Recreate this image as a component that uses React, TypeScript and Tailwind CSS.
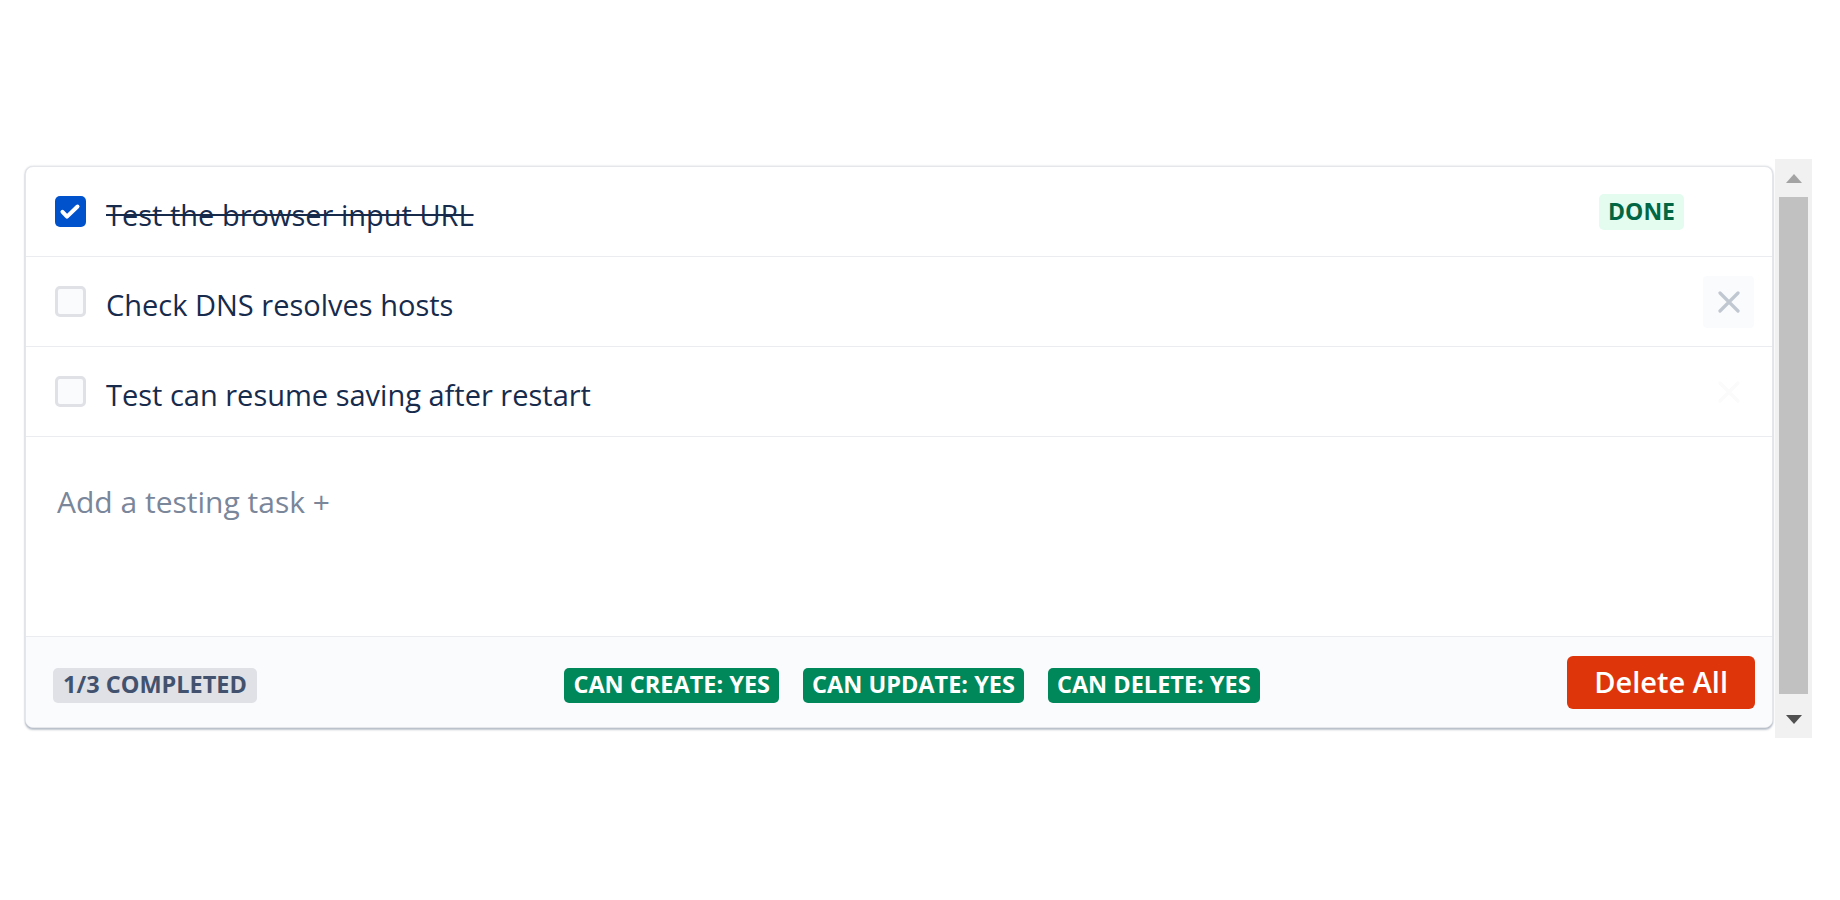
import React from "react";

type Task = { id: number; title: string; done: boolean; close: "hidden" | "hover" | "faint" };

const tasks: Task[] = [
  { id: 1, title: "Test the browser input URL", done: true, close: "hidden" },
  { id: 2, title: "Check DNS resolves hosts", done: false, close: "hover" },
  { id: 3, title: "Test can resume saving after restart", done: false, close: "faint" },
];

const permissions = ["Can create: yes", "Can update: yes", "Can delete: yes"];

function Checkbox({ checked }: { checked: boolean }) {
  if (checked) {
    return (
      <span className="flex h-[31px] w-[31px] shrink-0 items-center justify-center rounded-[5px] bg-[#0052cc]">
        <svg width="31" height="31" viewBox="0 0 31 31" fill="none">
          <path d="M7.5 15.8 L12 20.6 L22.5 10.5" stroke="#fff" strokeWidth="4" strokeLinecap="round" strokeLinejoin="round" />
        </svg>
      </span>
    );
  }
  return <span className="h-[31px] w-[31px] shrink-0 rounded-[5px] border-[3px] border-[#dfe1e6] bg-[#fafbfc]" />;
}

function CloseButton({ state }: { state: Task["close"] }) {
  const box =
    state === "hover"
      ? "bg-[#fafbfc] text-[#c1c7d0]"
      : state === "faint"
        ? "bg-transparent text-[#fbfbfc]"
        : "bg-transparent text-transparent";
  return (
    <button className={`ml-[19px] flex h-[52px] w-[51px] shrink-0 items-center justify-center rounded-[4px] ${box}`}>
      <svg width="22" height="22" viewBox="0 0 22 22" fill="none">
        <path d="M2 2 L20 20 M20 2 L2 20" stroke="currentColor" strokeWidth="3.2" strokeLinecap="round" />
      </svg>
    </button>
  );
}

function TaskRow({ task }: { task: Task }) {
  return (
    <div className="flex h-[90px] items-center border-b border-[#ebecf0] pl-[29px] pr-[18px]">
      <Checkbox checked={task.done} />
      <span className={`ml-[20px] mt-[6px] flex-1 text-[29px] leading-none ${task.done ? "line-through" : ""}`}>
        {task.title}
      </span>
      {task.done && (
        <span className="flex h-[36px] items-center rounded-[5px] bg-[#e3fcef] px-[9px] text-[23px] font-bold uppercase text-[#006644]">
          Done
        </span>
      )}
      <CloseButton state={task.close} />
    </div>
  );
}

function Scrollbar() {
  return (
    <div className="ml-[2px] flex h-[579px] w-[37px] shrink-0 flex-col bg-[#f1f1f1]">
      <div className="flex h-[38px] items-center justify-center">
        <svg width="16" height="9" viewBox="0 0 16 9">
          <path d="M8 0 L16 9 L0 9 Z" fill="#a3a3a3" />
        </svg>
      </div>
      <div className="mx-[4px] h-[497px] bg-[#c1c1c1]" />
      <div className="flex-1" />
      <div className="flex h-[38px] items-center justify-center">
        <svg width="16" height="9" viewBox="0 0 16 9">
          <path d="M0 0 L16 0 L8 9 Z" fill="#505050" />
        </svg>
      </div>
    </div>
  );
}

export default function App() {
  const completed = tasks.filter((t) => t.done).length;
  return (
    <div className="min-h-screen bg-white font-['Open_Sans','Noto_Sans',sans-serif] text-[#172b4d]">
      <div className="flex pl-[25px] pr-[28px] pt-[159px]">
        <div className="flex-1 pt-[7px]">
          <div className="overflow-hidden rounded-[8px] border border-[#e4e6ea] bg-white shadow-[0_2px_2px_rgba(9,30,66,0.25),0_0_2px_rgba(9,30,66,0.2)]">
            {tasks.map((task) => (
              <TaskRow key={task.id} task={task} />
            ))}
            <div className="h-[200px] border-b border-[#ebecf0] px-[31px] pt-[42px]">
              <div className="text-[30px] text-[#7a869a]">Add a testing task +</div>
            </div>
            <div className="flex h-[90px] items-center justify-between bg-[#fafbfc] pl-[27px] pr-[17px]">
              <span className="mt-[6px] flex h-[35px] items-center rounded-[5px] bg-[#dfe1e6] px-[10px] text-[23.5px] font-bold uppercase text-[#42526e]">
                {completed}/{tasks.length} completed
              </span>
              <div className="mt-[6px] flex gap-[24px]">
                {permissions.map((p) => (
                  <span
                    key={p}
                    className="flex h-[35px] items-center rounded-[5px] bg-[#00875a] px-[9px] text-[23.5px] font-bold uppercase text-white"
                  >
                    {p}
                  </span>
                ))}
              </div>
              <button className="h-[53px] rounded-[6px] bg-[#de350b] px-[27px] text-[29px] font-semibold text-white">
                Delete All
              </button>
            </div>
          </div>
        </div>
        <Scrollbar />
      </div>
    </div>
  );
}
